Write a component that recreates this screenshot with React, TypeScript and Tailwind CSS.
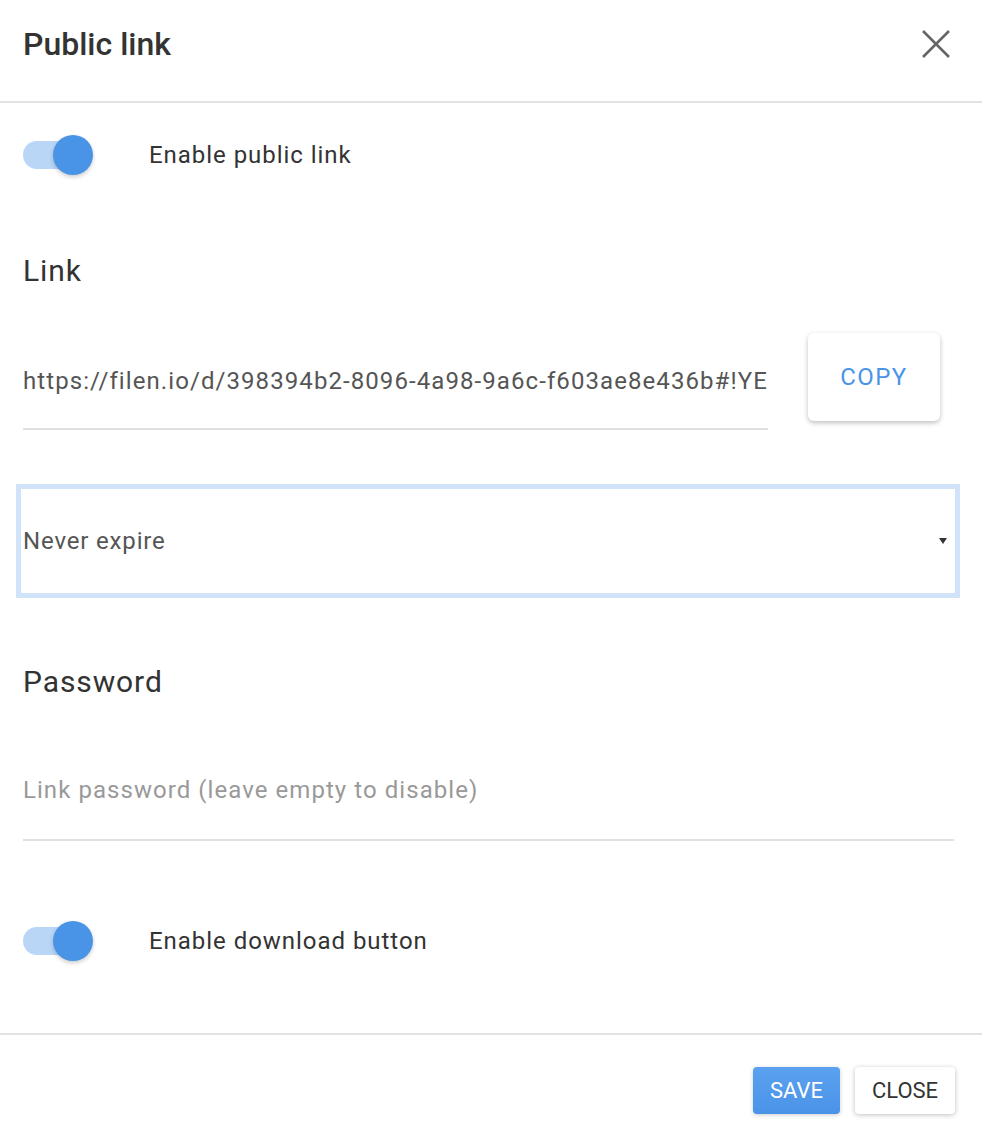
import type { ReactNode } from 'react';

function Toggle() {
    return (
        <div className="relative h-[40px] w-[70px] shrink-0">
            <div className="absolute left-0 top-[6px] h-[28px] w-[68px] rounded-full bg-[#b9d6f7]" />
            <div className="absolute right-0 top-0 size-[40px] rounded-full bg-[#4a94e8] shadow-[0_2px_4px_rgba(0,0,0,0.2)]" />
        </div>
    );
}

function ToggleRow({ label }: { label: string }) {
    return (
        <div className="flex h-[104px] items-center">
            <Toggle />
            <span className="ml-[56px] text-[24px] tracking-[0.04em] text-[#333]">
                {label}
            </span>
        </div>
    );
}

function SectionLabel({ children }: { children: ReactNode }) {
    return (
        <div className="flex h-[60px] items-center text-[30px] tracking-[0.03em] text-[#333]">
            {children}
        </div>
    );
}

export default function App() {
    return (
        <div
            className="min-h-[1142px] w-[982px] bg-white"
            style={{ fontFamily: 'Roboto, "Liberation Sans", sans-serif' }}
        >
            <div className="flex h-[103px] items-center justify-between border-b-2 border-[#e2e2e2] pb-[14px] pl-[23px] pr-[32px]">
                <h1 className="text-[32px] font-medium text-[#333]">
                    Public link
                </h1>
                <svg
                    width="28"
                    height="28"
                    viewBox="0 0 28 28"
                    className="text-[#666]"
                >
                    <path
                        d="M1 1 L27 27 M27 1 L1 27"
                        stroke="currentColor"
                        strokeWidth="2.6"
                        fill="none"
                    />
                </svg>
            </div>

            <div className="pl-[23px] pr-[28px]">
                <ToggleRow label="Enable public link" />

                <div className="mt-[33px]">
                    <SectionLabel>Link</SectionLabel>
                </div>

                <div className="mt-[33px] flex items-start">
                    <div className="flex h-[97px] w-[745px] items-center overflow-hidden whitespace-nowrap border-b-2 border-[#e0e0e0] text-[24px] tracking-[0.045em] text-[#555]">
                        https://filen.io/d/398394b2-8096-4a98-9a6c-f603ae8e436b#!YE
                    </div>
                    <button className="ml-[40px] flex h-[88px] w-[132px] items-center justify-center rounded-[6px] bg-white text-[24px] tracking-[0.06em] text-[#4a94e8] shadow-[0_2px_5px_rgba(0,0,0,0.25)]">
                        COPY
                    </button>
                </div>

                <div className="ml-[-7px] mt-[54px] flex h-[114px] w-[944px] items-center justify-between border-[5px] border-[#d1e3f8] pl-[2px] pr-[8px] text-[24px] tracking-[0.035em] text-[#555]">
                    <span>Never expire</span>
                    <svg width="8" height="6" viewBox="0 0 8 6">
                        <path d="M0 0 H8 L4 6 Z" fill="#333" />
                    </svg>
                </div>

                <div className="mt-[53px]">
                    <SectionLabel>Password</SectionLabel>
                </div>

                <div className="mt-[30px] flex h-[100px] items-center border-b-2 border-[#e0e0e0] text-[24px] tracking-[0.044em] text-[#999]">
                    Link password (leave empty to disable)
                </div>

                <div className="mt-[48px]">
                    <ToggleRow label="Enable download button" />
                </div>
            </div>

            <div className="mt-[40px] flex justify-end gap-[15px] border-t-2 border-[#e2e2e2] pb-[28px] pr-[27px] pt-[32px]">
                <button className="flex h-[47px] w-[87px] items-center justify-center rounded-[4px] bg-gradient-to-b from-[#5ba1ef] to-[#4a93e8] text-[22px] text-white shadow-[0_1px_4px_rgba(0,0,0,0.2)]">
                    SAVE
                </button>
                <button className="flex h-[47px] w-[100px] items-center justify-center rounded-[4px] bg-white text-[22px] text-[#333] shadow-[0_1px_5px_rgba(0,0,0,0.25)]">
                    CLOSE
                </button>
            </div>
        </div>
    );
}
